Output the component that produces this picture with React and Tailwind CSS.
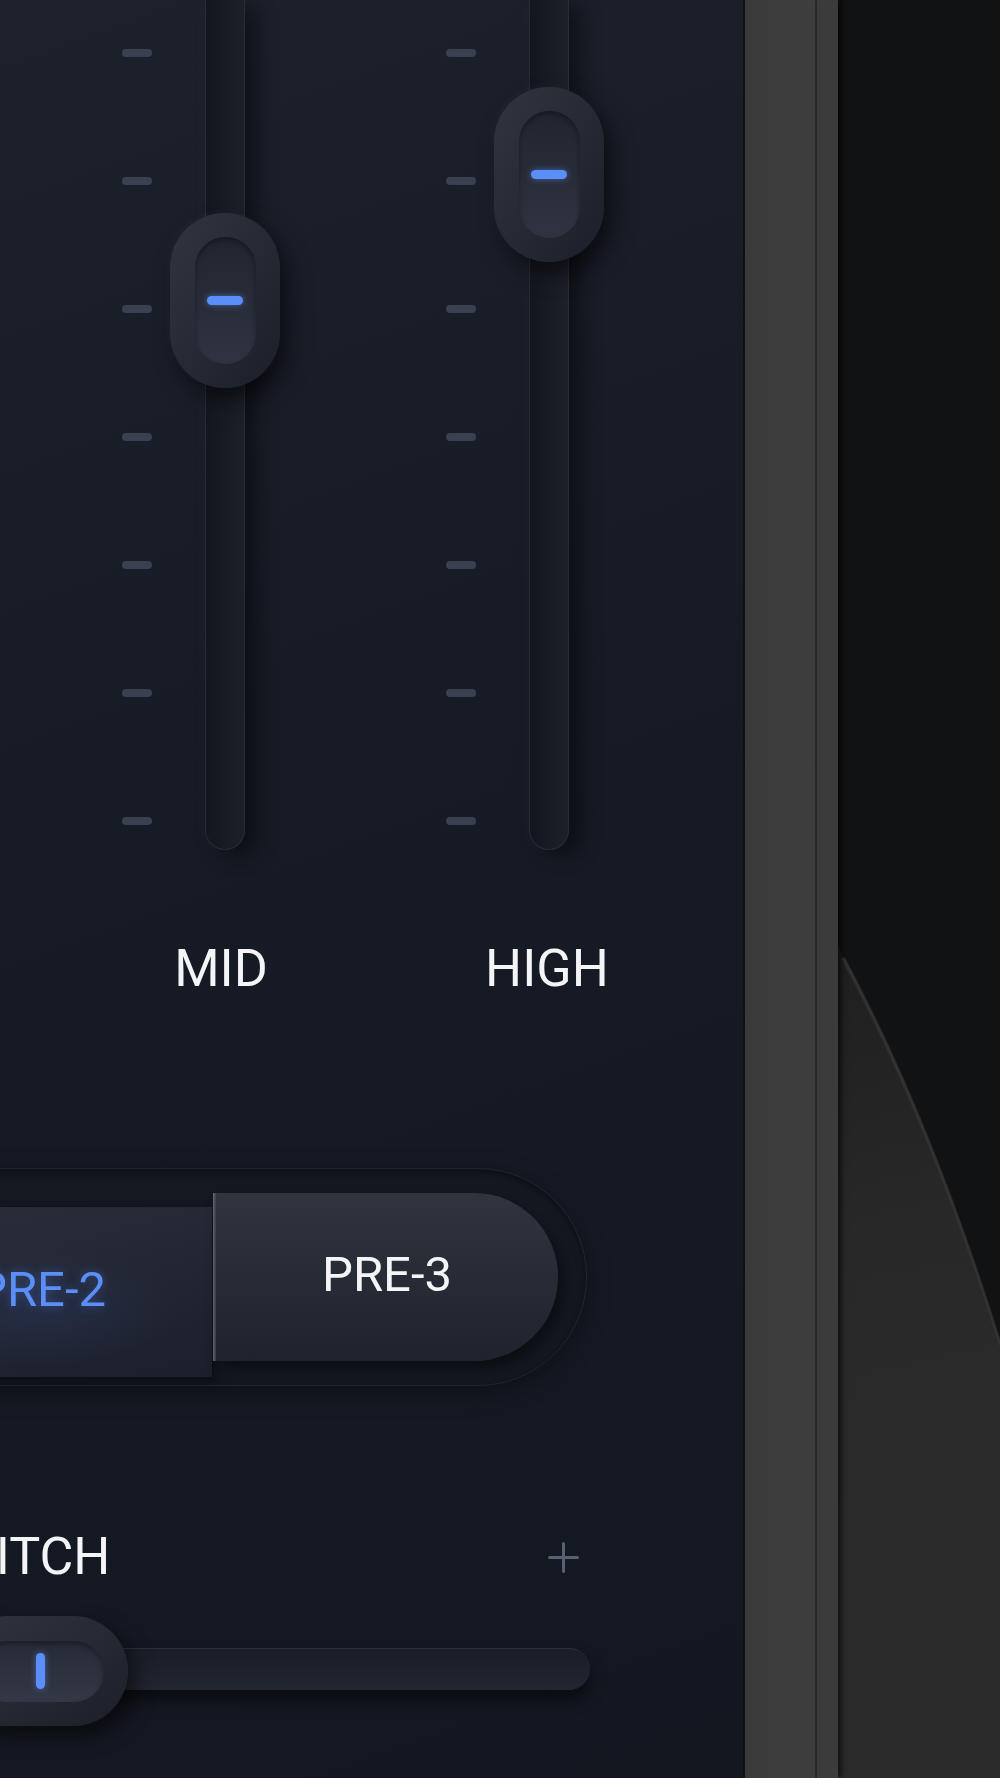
import React from "react";

const Tick = () => <div className="w-[30px] h-[8px] rounded-full bg-[#394051]" />;

function Knob({ pos }) {
  return (
    <div
      className={`absolute left-1/2 -translate-x-1/2 ${pos} w-[110px] h-[175px] rounded-full bg-linear-to-br from-[#31353f] via-[#262a34] to-[#1b1f28] shadow-[8px_12px_22px_rgba(0,0,0,0.55),-2px_-2px_6px_rgba(255,255,255,0.03)] flex items-center justify-center`}
    >
      <div className="w-[61px] h-[127px] rounded-full bg-linear-to-b from-[#21252f] to-[#303442] shadow-[inset_0_3px_5px_rgba(0,0,0,0.35)] flex items-center justify-center">
        <div className="w-[36px] h-[9px] rounded-full bg-[#5b8ef8] shadow-[0_0_6px_rgba(91,142,248,0.55)]" />
      </div>
    </div>
  );
}

function SliderCol({ knobPos }) {
  return (
    <div className="flex h-full">
      <div className="flex flex-col justify-between w-[30px] pt-[49px] h-[825px]">
        <Tick />
        <Tick />
        <Tick />
        <Tick />
        <Tick />
        <Tick />
        <Tick />
      </div>
      <div className="ml-[53px] relative w-[40px] h-full rounded-b-[20px] bg-linear-to-r from-[#13161e] to-[#1c2029] border-x border-b border-[#272c37] shadow-[12px_6px_20px_rgba(0,0,0,0.45),-6px_0_14px_rgba(255,255,255,0.02)]">
        <Knob pos={knobPos} />
      </div>
    </div>
  );
}

export default function App() {
  return (
    <div className="w-[1000px] h-[1778px] flex bg-[#111213] overflow-hidden font-[Roboto,'Liberation_Sans',sans-serif]">
      {/* Panel */}
      <div className="relative w-[745px] h-full shrink-0 overflow-hidden border-r-2 border-[#0d1017] bg-[linear-gradient(160deg,#1d212c_0%,#171b25_40%,#131720_100%)]">
        {/* sliders */}
        <div className="flex h-[850px] pl-[122px]">
          <SliderCol knobPos="top-[213px]" />
          <div className="w-[201px] shrink-0" />
          <SliderCol knobPos="top-[87px]" />
        </div>

        {/* labels */}
        <div className="flex mt-[93px] h-[52px] pl-[121px] text-[52px] leading-none text-[#f4f5f7]">
          <div className="w-[200px] text-center">MID</div>
          <div className="w-[126px]" />
          <div className="w-[200px] text-center">HIGH</div>
        </div>

        {/* presets */}
        <div className="mt-[173px] -ml-[160px] w-[747px] h-[218px] rounded-full bg-[#141821] border border-[#202530] shadow-[inset_0_3px_8px_rgba(0,0,0,0.45),0_6px_24px_rgba(0,0,0,0.35)] flex items-start pl-[29px] pt-[24px]">
          <div className="mt-[14px] w-[342px] h-[170px] shrink-0 flex items-center justify-center pb-[5px] bg-[radial-gradient(ellipse_40%_35%_at_50%_60%,rgba(60,100,220,0.12),transparent),linear-gradient(165deg,#2b2f3b,#1b1f2b)] shadow-[4px_4px_10px_rgba(0,0,0,0.45)]">
            <span className="text-[49px] leading-none text-[#5b8ef7] [text-shadow:0_0_10px_rgba(91,142,248,0.35)]">PRE-2</span>
          </div>
          <div className="ml-[1px] w-[3px] h-[168px] shrink-0 bg-linear-to-r from-[#6a6e78] to-[#3a3e47]" />
          <div className="w-[342px] h-[168px] shrink-0 rounded-r-[84px] flex items-center justify-center pb-[5px] bg-linear-to-b from-[#30343f] to-[#1f232d] shadow-[6px_8px_16px_rgba(0,0,0,0.45)]">
            <span className="text-[49px] leading-none text-[#f4f5f7]">PRE-3</span>
          </div>
        </div>

        {/* pitch header */}
        <div className="mt-[145px] -ml-[37px] w-[616px] h-[52px] flex items-center justify-between">
          <span className="text-[52px] leading-none text-[#f4f5f7]">PITCH</span>
          <svg width="31" height="31" viewBox="0 0 31 31" fill="none">
            <path d="M15.5 1.5v28M1.5 15.5h28" stroke="#566072" strokeWidth="3" strokeLinecap="round" />
          </svg>
        </div>

        {/* pitch slider */}
        <div className="relative mt-[33px] h-[110px] pt-[32px]">
          <div className="-ml-[100px] w-[690px] h-[42px] rounded-full bg-linear-to-b from-[#191d26] to-[#222630] border-t border-[#2c313c] shadow-[0_10px_16px_rgba(0,0,0,0.5)]" />
          <div className="absolute left-[-47px] top-0 w-[175px] h-[110px] rounded-full bg-linear-to-br from-[#30343f] via-[#262a34] to-[#1b1f28] shadow-[8px_10px_20px_rgba(0,0,0,0.55)] flex items-center justify-center">
            <div className="w-[127px] h-[61px] rounded-full bg-linear-to-b from-[#272b37] to-[#343846] shadow-[inset_0_3px_5px_rgba(0,0,0,0.3)] flex items-center justify-center">
              <div className="w-[9px] h-[36px] rounded-full bg-[#5b8ef8] shadow-[0_0_6px_rgba(91,142,248,0.55)]" />
            </div>
          </div>
        </div>
      </div>

      {/* bezel */}
      <div className="w-[70px] h-full shrink-0 bg-linear-to-r from-[#3a3a3a] to-[#3e3e3e]" />
      <div className="w-[2px] h-full shrink-0 bg-[#2b2b2b]" />
      <div className="relative z-10 w-[21px] h-full shrink-0 bg-[#3b3b3b] shadow-[3px_0_6px_rgba(0,0,0,0.7)]" />

      {/* right dark area with curved body */}
      <div className="relative flex-1 h-full bg-[#111213]">
        <svg className="absolute inset-0" width="162" height="1778" viewBox="0 0 162 1778" fill="none">
          <defs>
            <linearGradient id="body" x1="0" y1="950" x2="120" y2="1500" gradientUnits="userSpaceOnUse">
              <stop offset="0" stopColor="#1f1f1f" />
              <stop offset="0.5" stopColor="#282828" />
              <stop offset="1" stopColor="#2b2b2b" />
            </linearGradient>
          </defs>
          <path d="M0 945 L5 958 Q92 1120 162 1345 V1778 H0 Z" fill="url(#body)" />
          <path d="M5 958 Q92 1120 162 1345" stroke="#2c2c2c" strokeWidth="4" />
          <path d="M5 958 Q92 1120 162 1345" stroke="#363636" strokeWidth="1.2" />
        </svg>
      </div>
    </div>
  );
}
